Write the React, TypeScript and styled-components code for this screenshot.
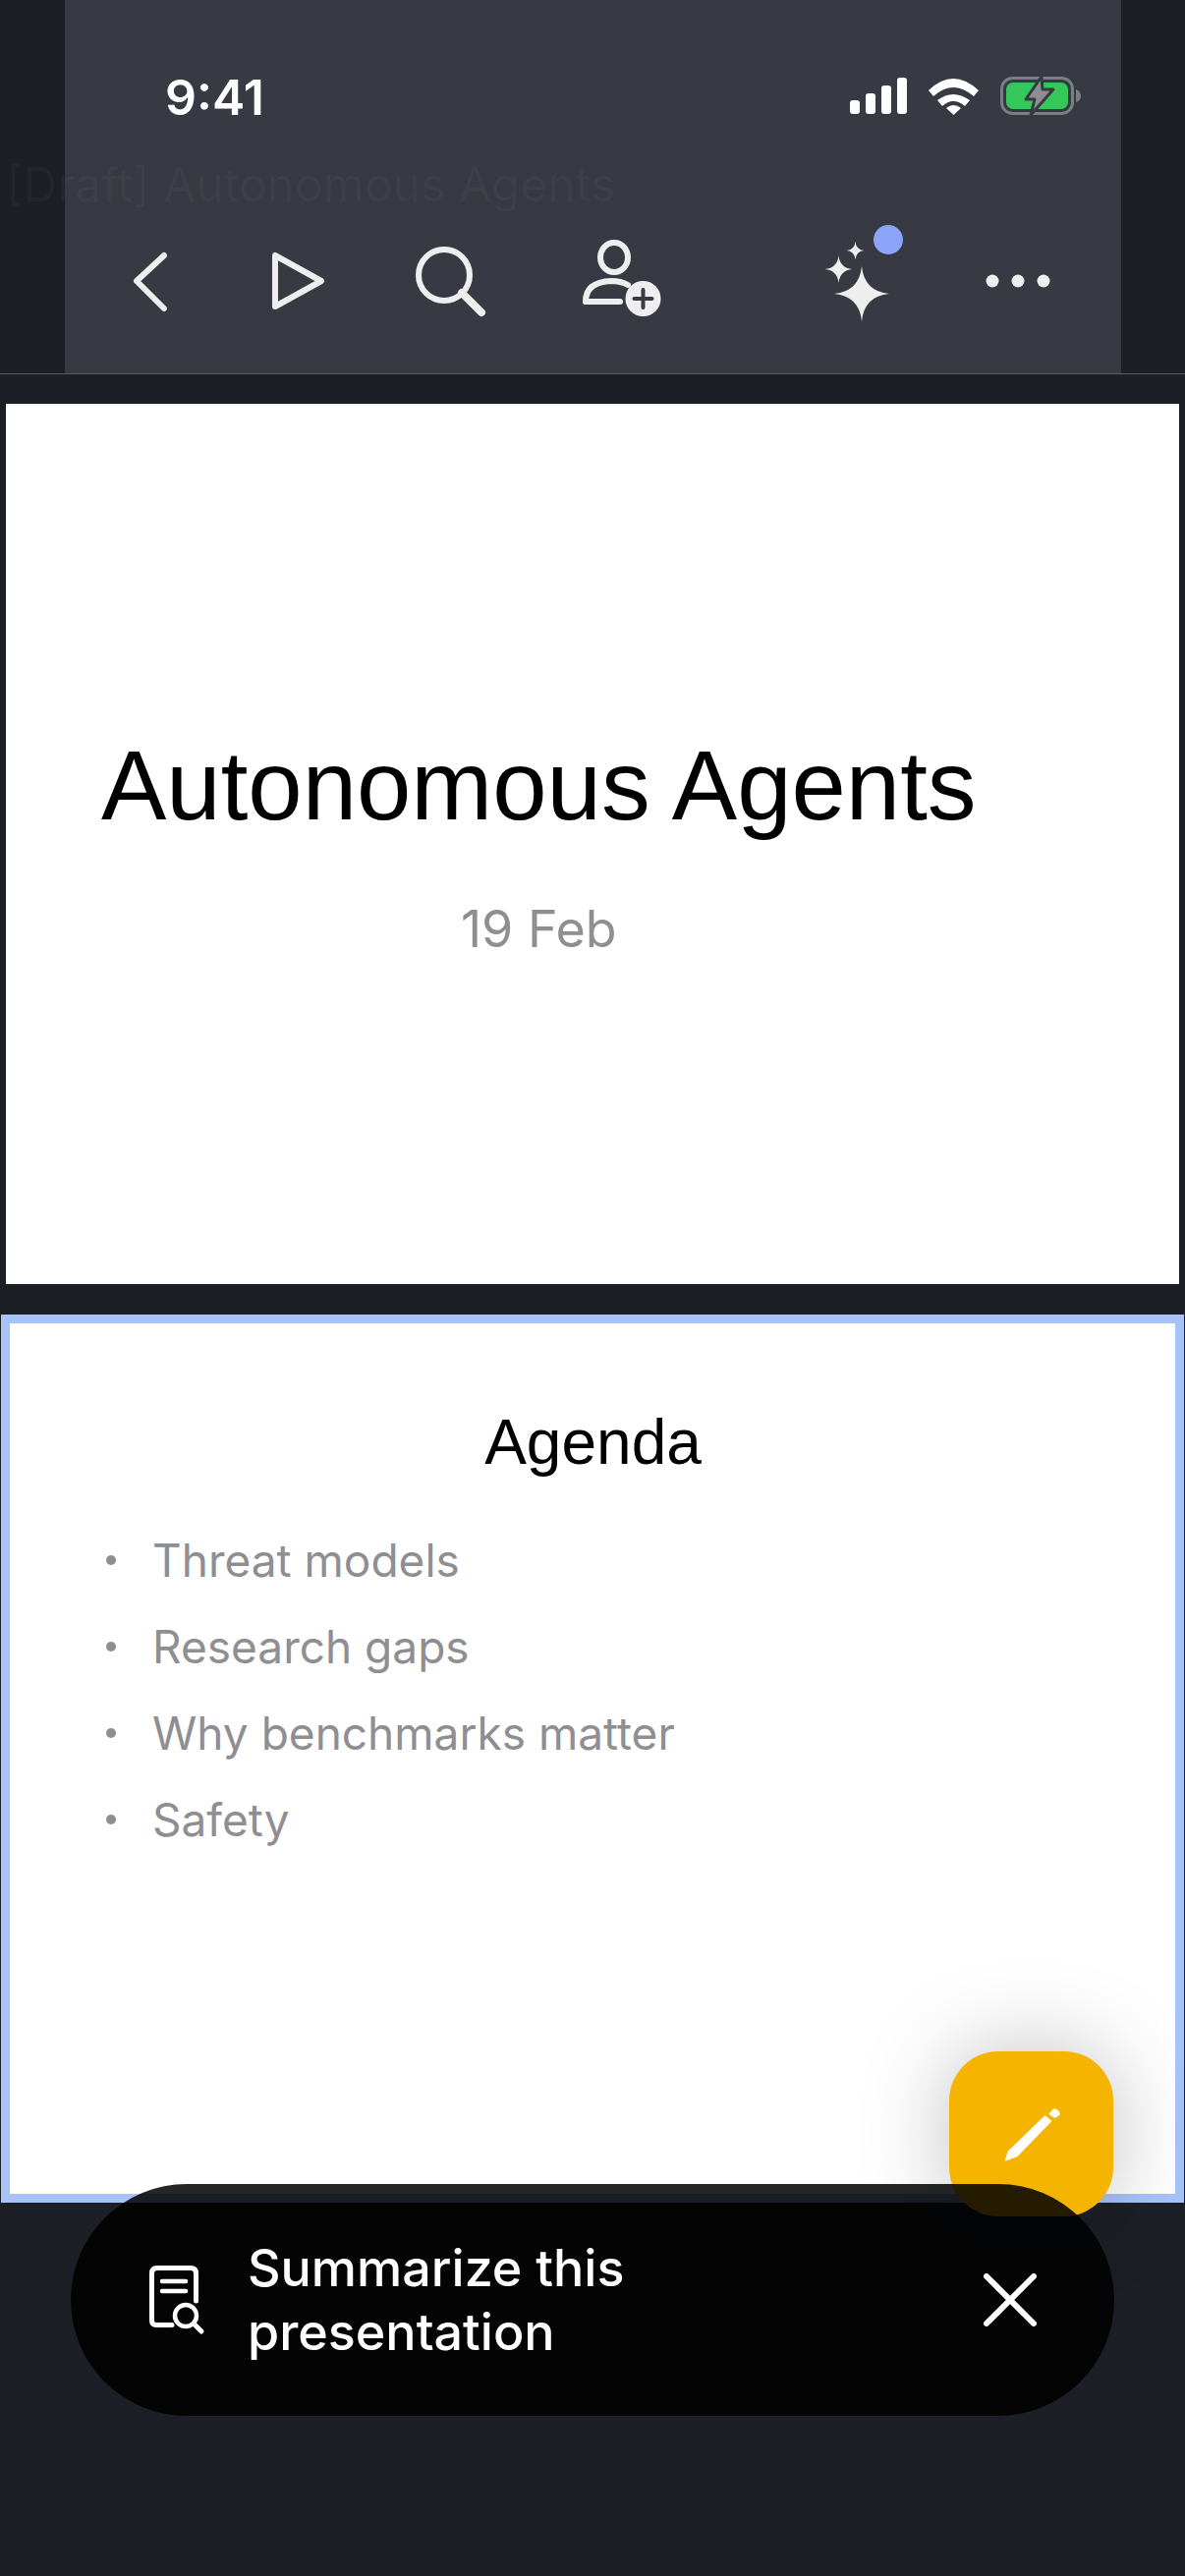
import React from 'react';
import styled, { createGlobalStyle } from 'styled-components';

const GlobalStyle = createGlobalStyle`
  html, body {
    margin: 0;
    padding: 0;
    background: #1c1f26;
    font-family: Inter, "Liberation Sans", sans-serif;
  }
`;

const Page = styled.div`
  position: relative;
  width: 1206px;
  height: 2622px;
  overflow: hidden;
  background: #1c1f26;
`;

const Header = styled.header`
  position: relative;
  height: 380px;
  border-bottom: 1px solid #5a5c62;
  display: flex;
  justify-content: center;
`;

const HeaderPanel = styled.div`
  width: 1075px;
  margin-left: 1px;
  background: #373a42;
`;

const StatusTime = styled.div`
  position: absolute;
  left: 168px;
  top: 69px;
  font-size: 50px;
  line-height: 60px;
  font-weight: 600;
  color: #fff;
`;

const GhostTitle = styled.div`
  position: absolute;
  left: 6px;
  top: 160px;
  font-size: 48px;
  line-height: 56px;
  color: rgba(255, 255, 255, 0.03);
  white-space: nowrap;
`;

const IconLayer = styled.svg`
  position: absolute;
  left: 0;
  top: 0;
`;

const Slides = styled.main`
  display: flex;
  flex-direction: column;
  padding-top: 30px;
  gap: 31px;
`;

const TitleSlide = styled.section`
  width: 1194px;
  height: 896px;
  margin-left: 6px;
  box-sizing: border-box;
  background: #fff;
  padding: 329px 0 0 97px;
`;

const TitleBlock = styled.div`
  display: inline-block;
  text-align: center;
`;

const SlideTitle = styled.h1`
  margin: 0;
  font-family: "Liberation Sans", Arial, sans-serif;
  font-size: 99.5px;
  line-height: 120px;
  font-weight: 400;
  color: #000;
`;

const SlideDate = styled.div`
  margin-top: 55px;
  font-size: 52px;
  line-height: 62px;
  color: #8e8e93;
`;

const AgendaSlide = styled.section`
  width: 1204px;
  height: 904px;
  box-sizing: border-box;
  margin-left: 1px;
  background: #fff;
  border: 9px solid #a8c3f8;
  padding: 83px 0 0 98px;
`;

const AgendaTitle = styled.h2`
  margin: 0 97px 0 0;
  text-align: center;
  font-family: "Liberation Sans", Arial, sans-serif;
  font-size: 64px;
  line-height: 76px;
  font-weight: 400;
  color: #000;
`;

const BulletList = styled.ul`
  list-style: none;
  margin: 53px 0 0;
  padding: 0;
  display: flex;
  flex-direction: column;
  gap: 30px;
`;

const Bullet = styled.li`
  display: flex;
  align-items: center;
  height: 58px;
  font-size: 46px;
  color: #8e8e93;

  &::before {
    content: '';
    width: 10px;
    height: 10px;
    border-radius: 50%;
    background: #8e8e93;
    margin-right: 37px;
  }
`;

const Fab = styled.button`
  position: absolute;
  left: 966px;
  top: 2088px;
  width: 167px;
  height: 168px;
  padding: 0;
  border: 0;
  border-radius: 50px;
  background: #f5b400;
  box-shadow: 0 0 90px rgba(0, 0, 0, 0.25);
  display: flex;
  align-items: center;
  justify-content: center;
`;

const Toast = styled.div`
  position: absolute;
  left: 72px;
  top: 2223px;
  width: 1062px;
  height: 236px;
  box-sizing: border-box;
  border-radius: 118px;
  background: rgba(0, 0, 0, 0.85);
  display: flex;
  align-items: center;
  padding: 0 79px 0 77px;
  color: #fff;
`;

const ToastIcon = styled.svg`
  flex: none;
`;

const ToastText = styled.div`
  flex: 1;
  margin-left: 43px;
  font-size: 52px;
  line-height: 65px;
  font-weight: 500;
`;

const sparkle = (cx: number, cy: number, r: number) => {
  const k = r * 0.09;
  return `M${cx} ${cy - r}Q${cx + k} ${cy - k} ${cx + r} ${cy}Q${cx + k} ${cy + k} ${cx} ${cy + r}Q${cx - k} ${cy + k} ${cx - r} ${cy}Q${cx - k} ${cy - k} ${cx} ${cy - r}Z`;
};

function HeaderIcons() {
  return (
    <IconLayer width="1206" height="380" viewBox="0 0 1206 380">
      <rect x="865" y="102" width="10" height="14" rx="3" fill="#fff" />
      <rect x="881" y="95" width="10" height="21" rx="3" fill="#fff" />
      <rect x="897" y="87" width="10" height="29" rx="3" fill="#fff" />
      <rect x="913" y="79" width="10" height="37" rx="3" fill="#fff" />
      <path d="M945 92Q970 68 996 92L991 98Q970 80 950 98Z" fill="#fff" />
      <path d="M954 102Q970 90 987 102L982 108Q970 98 959 108Z" fill="#fff" />
      <path d="M970.500 117L963 110Q970.500 104 978 110Z" fill="#fff" />
      <rect x="1019.500" y="79.500" width="72" height="36" rx="11" fill="none" stroke="#7c7e83" strokeWidth="3" />
      <rect x="1024" y="84" width="63" height="27" rx="7" fill="#34c759" />
      <path d="M1095 91Q1100 93 1100 98Q1100 102 1095 104Z" fill="#7c7e83" />
      <path d="M1060 78L1044 101H1053L1049 117L1072 91H1061Z" fill="#8e8e93" stroke="#373a42" strokeWidth="3" strokeLinejoin="round" />

      <g fill="none" stroke="#eeeeee" strokeWidth="6" strokeLinecap="round" strokeLinejoin="round">
        <path d="M167 260L139 286L167 314" />
        <path d="M280 260V312L327 286Z" />
        <ellipse cx="452" cy="280" rx="26" ry="26" />
        <path d="M470 298L490 318" strokeWidth="8" />
        <ellipse cx="625" cy="262" rx="14" ry="15" />
        <path d="M596 307Q596 287 622 286Q632 286 639 290" />
        <path d="M596 307H631" />
      </g>
      <circle cx="654.500" cy="304" r="18" fill="#eeeeee" />
      <path d="M654.500 295V313M645.500 304H663.500" stroke="#373a42" strokeWidth="4" strokeLinecap="round" />
      <path d={sparkle(877, 299, 28)} fill="#eeeeee" />
      <path d={sparkle(853.5, 274, 14)} fill="#eeeeee" />
      <path d={sparkle(870.5, 255, 9)} fill="#eeeeee" />
      <circle cx="904" cy="244" r="15" fill="#8ca5f8" />
      <circle cx="1010" cy="286" r="6.500" fill="#eeeeee" />
      <circle cx="1036" cy="286" r="6.500" fill="#eeeeee" />
      <circle cx="1062" cy="286" r="6.500" fill="#eeeeee" />
    </IconLayer>
  );
}

export default function App() {
  return (
    <>
      <GlobalStyle />
      <Page>
        <Header>
          <HeaderPanel />
          <GhostTitle>[Draft] Autonomous Agents</GhostTitle>
          <StatusTime>9:41</StatusTime>
          <HeaderIcons />
        </Header>
        <Slides>
          <TitleSlide>
            <TitleBlock>
              <SlideTitle>Autonomous Agents</SlideTitle>
              <SlideDate>19 Feb</SlideDate>
            </TitleBlock>
          </TitleSlide>
          <AgendaSlide>
            <AgendaTitle>Agenda</AgendaTitle>
            <BulletList>
              <Bullet>Threat models</Bullet>
              <Bullet>Research gaps</Bullet>
              <Bullet>Why benchmarks matter</Bullet>
              <Bullet>Safety</Bullet>
            </BulletList>
          </AgendaSlide>
        </Slides>
        <Fab aria-label="Edit">
          <svg width="60" height="60" viewBox="0 0 60 60">
            <path d="M2.500 58L5.500 48L43.500 11L50.500 17L15.500 53Z" fill="#fff" />
            <path d="M47.500 10L51 5.500Q53 3.500 55.500 5L58 7.500Q59.500 9.500 57.500 11.500L53.500 14Z" fill="#fff" />
          </svg>
        </Fab>
        <Toast>
          <ToastIcon width="60" height="72" viewBox="0 0 60 72" fill="none" stroke="#fff" strokeLinecap="round">
            <path d="M26 61.500H10Q5.500 61.500 5.500 57V9Q5.500 3.500 11 3.500H45Q50.500 3.500 50.500 9V37" strokeWidth="5" />
            <path d="M16 17H40M16 27H40" strokeWidth="4.500" />
            <circle cx="40" cy="52" r="11" strokeWidth="4.500" />
            <path d="M48 60L56 68" strokeWidth="5" />
          </ToastIcon>
          <ToastText>Summarize this<br />presentation</ToastText>
          <ToastIcon width="54" height="54" viewBox="0 0 54 54" fill="none" stroke="#fff" strokeWidth="6" strokeLinecap="round">
            <path d="M3 3L51 51M51 3L3 51" />
          </ToastIcon>
        </Toast>
      </Page>
    </>
  );
}
